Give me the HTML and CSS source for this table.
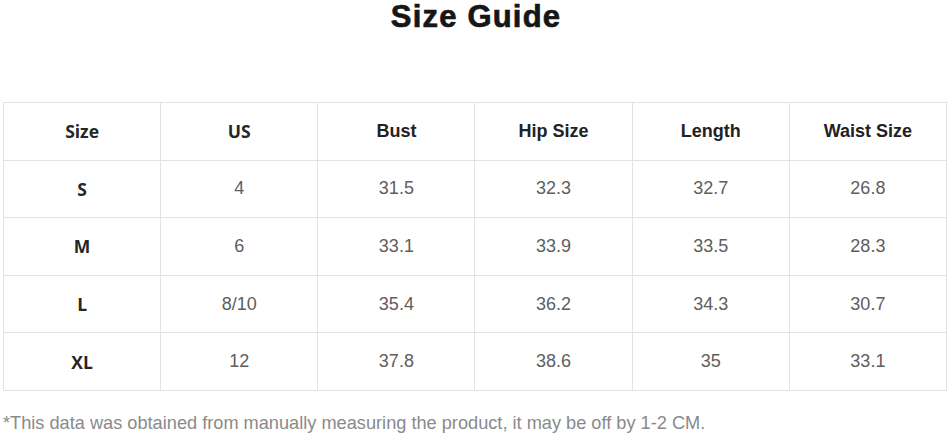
FILE: index.html
```html
<!DOCTYPE html>
<html>
<head>
<meta charset="utf-8">
<link rel="stylesheet" href="styles.css">
</head>
<body>
<div class="page">
  <h1 class="title">Size Guide</h1>
  <table class="chart">
    <tr class="head">
      <th class="os">Size</th><th class="os">US</th><th>Bust</th><th>Hip Size</th><th>Length</th><th>Waist Size</th>
    </tr>
    <tr><th class="os">S</th><td>4</td><td>31.5</td><td>32.3</td><td>32.7</td><td>26.8</td></tr>
    <tr><th class="os">M</th><td>6</td><td>33.1</td><td>33.9</td><td>33.5</td><td>28.3</td></tr>
    <tr><th class="os">L</th><td>8/10</td><td>35.4</td><td>36.2</td><td>34.3</td><td>30.7</td></tr>
    <tr><th class="os">XL</th><td>12</td><td>37.8</td><td>38.6</td><td>35</td><td>33.1</td></tr>
  </table>
  <p class="note">*This data was obtained from manually measuring the product, it may be off by 1-2 CM.</p>
</div>
</body>
</html>
```
FILE: styles.css
```css
html, body { margin: 0; padding: 0; background: #fff; }
.page {
  width: 951px;
  height: 435px;
  padding: 0 4px 0 3px;
  box-sizing: border-box;
  font-family: "Liberation Sans", Arial, sans-serif;
  display: flex;
  flex-direction: column;
}
.title {
  margin: 0;
  height: 102px;
  text-align: center;
  font-size: 31px;
  line-height: 34px;
  letter-spacing: 1.2px;
  font-weight: bold;
  color: #161616;
  -webkit-text-stroke: 0.7px #161616;
  padding-left: 2px;
  box-sizing: border-box;
}
.chart {
  width: 944px;
  border-collapse: collapse;
  table-layout: fixed;
}
.chart th, .chart td {
  border: 1px solid #e3e3e3;
  height: 56.6px;
  padding: 0;
  text-align: center;
  font-size: 18px;
}
.chart th { color: #222; font-weight: bold; }
.chart td { color: #5e5e5e; }
.chart th.os { font-family: "Open Sans", sans-serif; font-size: 17.5px; color: #262626; }
.note {
  margin: 22px 0 0 0;
  font-size: 18.2px;
  color: #8a8a8a;
  white-space: nowrap;
}
```
